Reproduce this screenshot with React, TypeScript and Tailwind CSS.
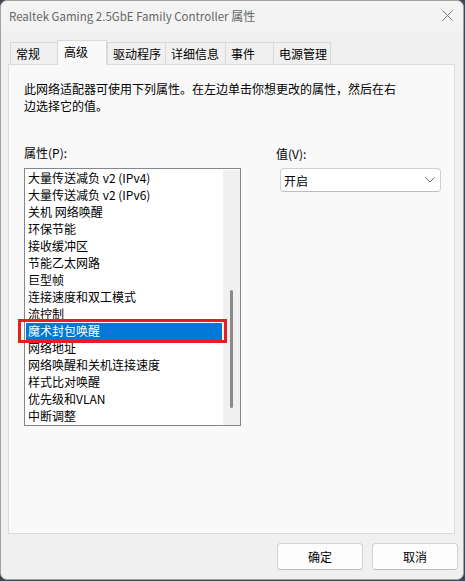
import React from "react";

const FONT = { fontFamily: '"Noto Sans CJK SC", sans-serif' };

const tabs = [
  { label: "常规", w: "w-[47px]" },
  { label: "高级", w: "w-[50px]", active: true },
  { label: "驱动程序", w: "w-[58px]" },
  { label: "详细信息", w: "w-[60px]" },
  { label: "事件", w: "w-[48px]" },
  { label: "电源管理", w: "w-[58px]", last: true },
];

const items = [
  "大量传送减负 v2 (IPv4)",
  "大量传送减负 v2 (IPv6)",
  "关机 网络唤醒",
  "环保节能",
  "接收缓冲区",
  "节能乙太网路",
  "巨型帧",
  "连接速度和双工模式",
  "流控制",
  "魔术封包唤醒",
  "网络地址",
  "网络唤醒和关机连接速度",
  "样式比对唤醒",
  "优先级和VLAN",
  "中断调整",
];

export default function App() {
  return (
    <div className="w-[465px] h-[581px] bg-[#3d4652] overflow-hidden text-[12px] text-black" style={FONT}>
      <div className="w-[464px] h-[580px] rounded-[7px] border border-[#a3a3a3] bg-[#f0f0f0] flex flex-col overflow-hidden">
        {/* Title bar */}
        <div className="h-[30px] shrink-0 flex items-center justify-between pl-[8px] pr-[10px] bg-[#f3f3f3]">
          <span className="text-[#666666] leading-none pt-px">
            <span className="text-[11.5px]">Realtek Gaming 2.5GbE Family Controller</span> 属性
          </span>
          <svg width="11" height="11" viewBox="0 0 11 11" className="mt-[-1px]">
            <path d="M0.5 0.5 L10.5 10.5 M10.5 0.5 L0.5 10.5" stroke="#7a7a7a" strokeWidth="1" fill="none" />
          </svg>
        </div>

        {/* Tabs */}
        <div className="h-[33px] shrink-0 flex items-end pl-[9px] relative z-10">
          {tabs.map((t) =>
            t.active ? (
              <div
                key={t.label}
                className={`${t.w} h-[25px] -mb-px border-l border-t border-r border-[#d9d9d9] bg-[#f9f9f9] pl-[6px] pb-[3px] flex items-center`}
              >
                {t.label}
              </div>
            ) : (
              <div
                key={t.label}
                className={`${t.w} h-[22px] border-l border-t ${t.last ? "border-r" : ""} border-[#d9d9d9] bg-[#f0f0f0] pl-[5px] flex items-center`}
              >
                {t.label}
              </div>
            )
          )}
        </div>

        {/* Panel */}
        <div className="ml-[7px] mr-[8px] h-[470px] shrink-0 border border-[#dcdcdc] bg-[#f9f9f9] pl-[15px] pt-[15px]">
          <div className="w-[380px] leading-[17px]">
            此网络适配器可使用下列属性。在左边单击你想更改的属性，然后在右边选择它的值。
          </div>

          <div className="flex mt-[30px]">
            {/* left column */}
            <div className="w-[217px] flex flex-col">
              <div className="leading-[17px]">属性(P):</div>
              <div className="relative mt-[7px] w-[217px] h-[258px] border border-[#828790] bg-white flex">
                <div className="flex-1 pt-px">
                  {items.map((it, i) =>
                    i === 9 ? (
                      <div key={it} className="h-[17px] leading-[16px] ml-px mr-px pl-[2px] bg-[#0078d7] text-white whitespace-nowrap">
                        {it}
                      </div>
                    ) : (
                      <div key={it} className="h-[17px] leading-[16px] pl-[3px] whitespace-nowrap">
                        {it}
                      </div>
                    )
                  )}
                </div>
                <div className="w-[17px] mt-px bg-[#f0f0f0] relative">
                  <div className="absolute left-[7px] top-[120px] w-[3px] h-[118px] rounded-full bg-[#8a8a8a]" />
                </div>
                {/* annotation box */}
                <div className="absolute left-[-7px] top-[150px] w-[209px] h-[24px] border-[3px] border-[#e81c24]" />
              </div>
            </div>

            {/* right column */}
            <div className="ml-[35px] flex flex-col">
              <div className="leading-[17px] pt-px">值(V):</div>
              <div className="mt-[6px] ml-[4px] w-[161px] h-[24px] rounded-[4px] border border-[#d0d0d0] border-b-[#bdbdbd] bg-white flex items-center justify-between pl-[3px] pr-[5px]">
                <span className="leading-[17px]">开启</span>
                <svg width="10" height="6" viewBox="0 0 10 6">
                  <path d="M0.5 0.5 L5 5 L9.5 0.5" stroke="#6a6a6a" strokeWidth="1" fill="none" />
                </svg>
              </div>
            </div>
          </div>
        </div>

        {/* Buttons */}
        <div className="flex justify-end gap-[9px] mt-[9px] pr-[5px]">
          <div className="w-[86px] h-[27px] rounded-[4px] border border-[#d3d3d3] border-b-[#bebebe] bg-[#fdfdfd] flex items-center justify-center">
            确定
          </div>
          <div className="w-[86px] h-[27px] rounded-[4px] border border-[#d3d3d3] border-b-[#bebebe] bg-[#fdfdfd] flex items-center justify-center">
            取消
          </div>
        </div>
      </div>
    </div>
  );
}
